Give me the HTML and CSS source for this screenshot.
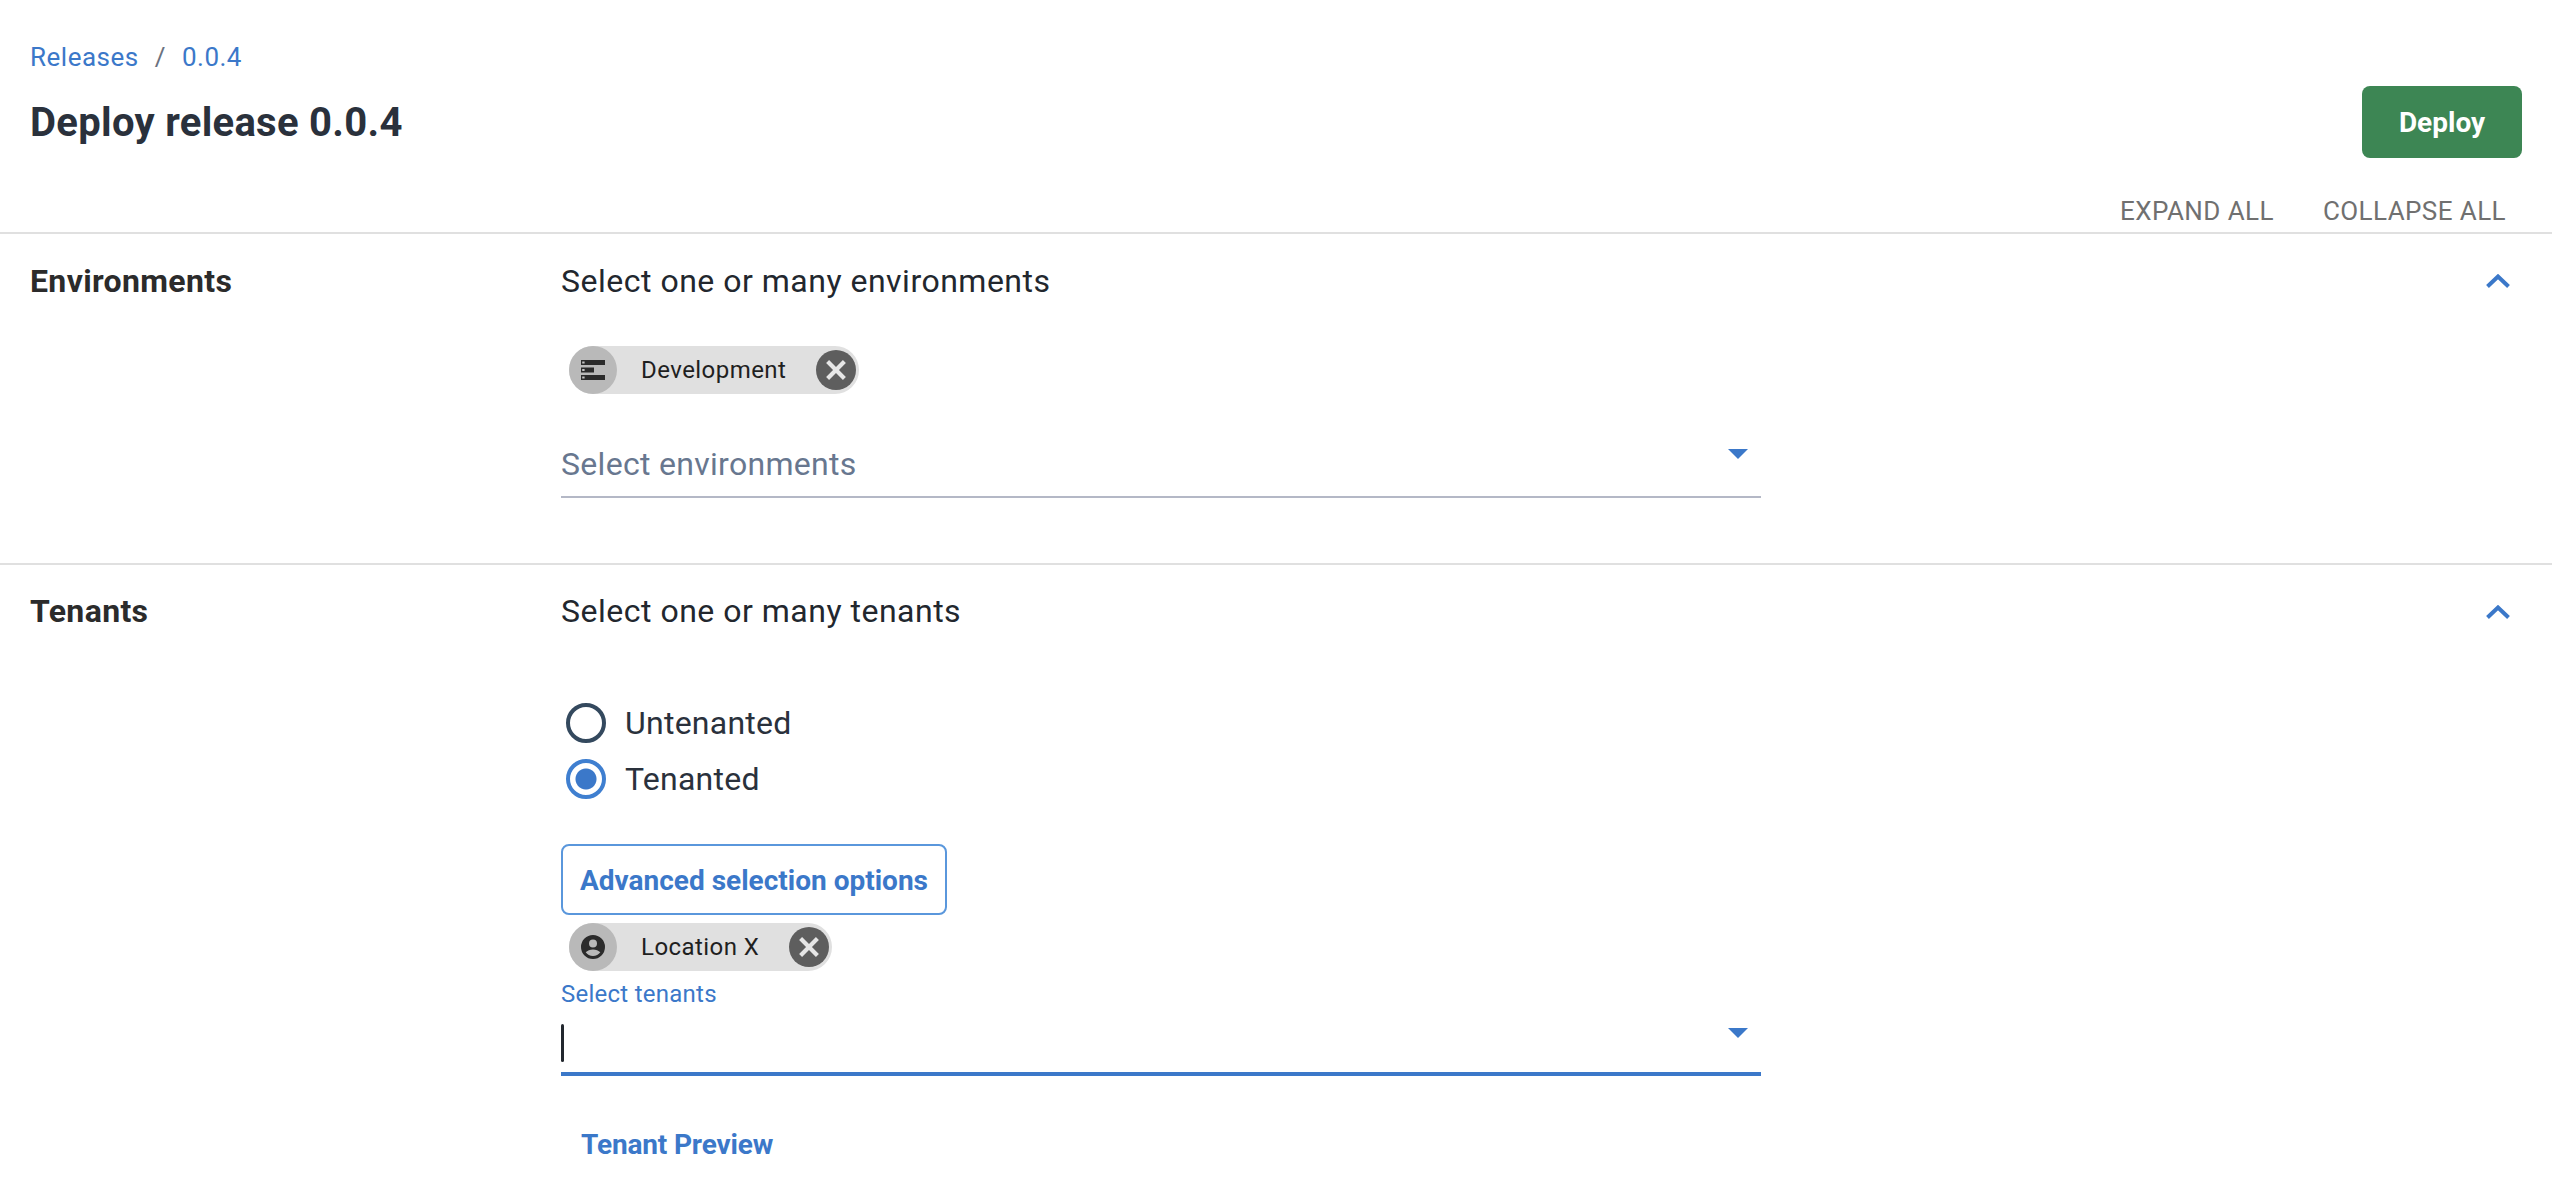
FILE: index.html
```html
<!DOCTYPE html>
<html lang="en">
<head>
<meta charset="utf-8">
<title>Deploy release 0.0.4</title>
<link rel="stylesheet" href="styles.css">
</head>
<body>
<header class="page-head">
  <div class="head-text">
    <nav class="crumbs"><a class="crumb">Releases</a><span class="crumb-sep">/</span><a class="crumb">0.0.4</a></nav>
    <h1 class="title">Deploy release 0.0.4</h1>
  </div>
  <button class="deploy">Deploy</button>
</header>
<div class="actions"><span class="action">EXPAND ALL</span><span class="action">COLLAPSE ALL</span></div>

<section class="section section-env">
  <h2 class="section-name">Environments</h2>
  <div class="section-body">
    <div class="summary">Select one or many environments</div>
    <div class="chip chip-env">
      <span class="avatar">
        <svg class="avatar-icon" viewBox="0 0 24 24"><path fill="#2b2b2b" d="M0 2h24v5H0zM0 9.500h13v5H0zM0 17h24v5H0z"/><path fill="#c4c4c4" d="M1.200 3.500h2.400v2H1.200zM1.200 11h2.400v2H1.200zM1.200 18.500h2.400v2H1.200z"/></svg>
      </span>
      <span class="chip-label">Development</span>
      <span class="chip-close"><svg class="close-icon" viewBox="0 0 20 20"><path d="M3 3l14 14M17 3L3 17"/></svg></span>
    </div>
    <div class="field field-env">
      <span class="placeholder">Select environments</span>
      <span class="caret-down"></span>
    </div>
  </div>
  <svg class="chevron" viewBox="0 0 24 14"><path d="M1.500 12.500L12 2.500l10.500 10"/></svg>
</section>

<section class="section section-ten">
  <h2 class="section-name">Tenants</h2>
  <div class="section-body">
    <div class="summary">Select one or many tenants</div>
    <div class="radios">
      <label class="radio"><span class="radio-mark"></span>Untenanted</label>
      <label class="radio"><span class="radio-mark radio-on"></span>Tenanted</label>
    </div>
    <button class="outline">Advanced selection options</button>
    <div class="chip chip-ten">
      <span class="avatar">
        <svg class="avatar-icon" viewBox="0 0 24 24"><path fill="#2b2b2b" fill-rule="evenodd" d="M12 0a12 12 0 1 0 0 24 12 12 0 0 0 0-24zm0 4.600a4 4 0 1 1 0 8 4 4 0 0 1 0-8zm0 16.400c-3 0-5.700-1.400-7.300-3.700 1.600-1.900 4.500-2.900 7.300-2.900s5.700 1 7.300 2.900C17.700 19.600 15 21 12 21z"/></svg>
      </span>
      <span class="chip-label">Location X</span>
      <span class="chip-close"><svg class="close-icon" viewBox="0 0 20 20"><path d="M3 3l14 14M17 3L3 17"/></svg></span>
    </div>
    <div class="float-label">Select tenants</div>
    <div class="field field-ten">
      <span class="text-cursor"></span>
      <span class="caret-down"></span>
    </div>
    <div class="preview">Tenant Preview</div>
  </div>
  <svg class="chevron" viewBox="0 0 24 14"><path d="M1.500 12.500L12 2.500l10.500 10"/></svg>
</section>
</body>
</html>
```
FILE: styles.css
```css
* { box-sizing: border-box; }
html, body { margin: 0; padding: 0; background: #fff; }
body { font-family: Roboto, "Liberation Sans", sans-serif; color: #2e3640; height: 1204px; overflow: hidden; }

.page-head { display: flex; justify-content: space-between; align-items: flex-start; padding: 0 30px 0 30px; height: 191px; }
.head-text { padding-top: 43px; }
.crumbs { display: flex; align-items: center; font-size: 26px; line-height: 28px; letter-spacing: 0.5px; color: #3b78c9; }
.crumb-sep { color: #6b7280; margin: 0 16px 0 16px; }
.title { margin: 28px 0 0; font-size: 40px; line-height: 48px; font-weight: 700; letter-spacing: 0.3px; color: #2a313c; }
.deploy { margin-top: 86px; width: 160px; height: 72px; padding: 2px 0 0; border: 0; border-radius: 8px; background: #3d8654; color: #fff; font: 700 28px/1 Roboto, sans-serif; }

.actions { display: flex; justify-content: flex-end; gap: 49px; padding-right: 46px; height: 41px; font-size: 26px; line-height: 40px; letter-spacing: 0.42px; color: #707070; }

.section { position: relative; display: flex; border-top: 2px solid #e0e0e0; padding-left: 30px; }
.section-env { height: 331px; }
.section-ten { height: 641px; }
.section-name { margin: 0; width: 531px; flex: none; font-size: 32px; line-height: 36px; font-weight: 700; letter-spacing: 0.35px; color: #2b2b2b; padding-top: 29px; }
.section-ten .section-name { padding-top: 28px; }
.section-body { width: 1200px; padding-top: 29px; }
.section-ten .section-body { padding-top: 28px; }
.summary { font-size: 32px; line-height: 36px; letter-spacing: 0.5px; color: #22272e; }
.chevron { position: absolute; right: 42px; top: 40px; width: 24px; height: 14px; fill: none; stroke: #3b78c9; stroke-width: 4; }

.chip { display: inline-flex; align-items: center; height: 48px; margin-left: 8px; border-radius: 24px; background: #e0e0e0; }
.chip-env { margin-top: 47px; width: 290px; }
.chip-ten { display: flex; margin-top: 9px; width: 263px; }
.avatar { display: flex; align-items: center; justify-content: center; flex: none; width: 48px; height: 48px; border-radius: 50%; background: #b9b9b9; }
.avatar-icon { width: 24px; height: 24px; }
.chip-label { flex: 1; padding-left: 24px; font-size: 24px; line-height: 48px; letter-spacing: 0.45px; color: #1f1f1f; }
.chip-close { display: flex; align-items: center; justify-content: center; flex: none; width: 40px; height: 40px; margin-right: 3px; border-radius: 50%; background: #5e5e5e; }
.close-icon { width: 24px; height: 24px; fill: none; stroke: #e6e6e6; stroke-width: 3.500; }

.field { position: relative; display: flex; align-items: center; width: 1200px; }
.field-env { height: 63px; margin-top: 41px; border-bottom: 2px solid #b4b8c6; }
.field-ten { height: 62px; margin-top: 6px; border-bottom: 4px solid #3b78c9; }
.placeholder { font-size: 32px; line-height: 36px; letter-spacing: 0.3px; color: #68778f; margin-top: -3px; }
.caret-down { position: absolute; right: 13px; top: 14px; width: 0; height: 0; border-left: 10px solid transparent; border-right: 10px solid transparent; border-top: 10px solid #3b78c9; }
.field-ten .caret-down { top: 14px; }
.text-cursor { width: 3px; height: 38px; border-radius: 2px; background: #22272e; }

.radios { margin-top: 66px; margin-left: 1px; }
.radio { display: flex; align-items: center; height: 56px; font-size: 32px; letter-spacing: 0.25px; color: #2a313c; }
.radio-mark { flex: none; width: 40px; height: 40px; margin: 0 19px 0 4px; border-radius: 50%; border: 4px solid #34495e; background: #fff; }
.radio-on { border-color: #3f7fd0; background: radial-gradient(circle, #3b78c9 0 10px, #fff 11px); }
.outline { display: block; margin-top: 37px; width: 386px; height: 71px; padding: 2px 0 0; border: 2px solid #5a97dc; border-radius: 8px; background: #fff; color: #3b78c9; font: 700 28px/1 Roboto, sans-serif; }
.chip-ten { margin-top: 8px; }
.float-label { margin-top: 9px; font-size: 24px; line-height: 28px; letter-spacing: 0.25px; color: #3b78c9; }
.preview { margin-top: 53px; padding-left: 20px; font-size: 28px; line-height: 32px; font-weight: 700; letter-spacing: -0.15px; color: #3b78c9; }
```
